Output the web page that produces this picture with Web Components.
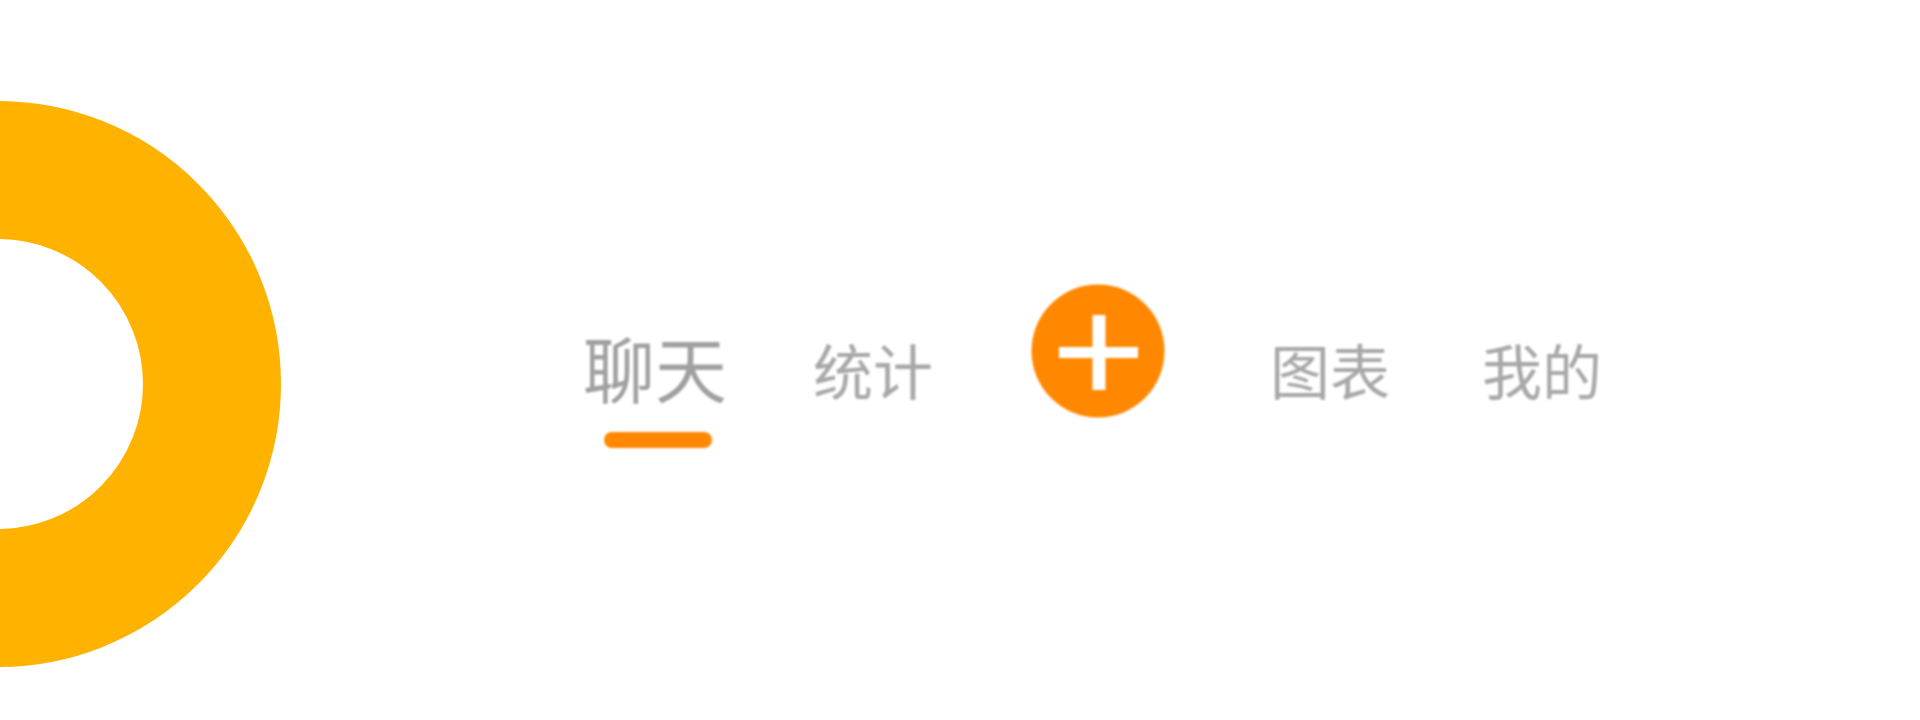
<!DOCTYPE html>
<html lang="zh">
<head>
<meta charset="utf-8">
<title>tabs</title>
<style>
  html, body { margin: 0; height: 100%; background: #fff; overflow: hidden; }
</style>
</head>
<body>
<app-page>
  <ring-mark></ring-mark>
  <tab-bar>
    <tab-item active>聊天</tab-item>
    <tab-item style="margin-left:86px">统计</tab-item>
    <add-button style="margin-left:97.5px"></add-button>
    <tab-item style="margin-left:105.5px">图表</tab-item>
    <tab-item style="margin-left:92px">我的</tab-item>
  </tab-bar>
</app-page>
<script>
class AppPage extends HTMLElement {
  constructor() {
    super();
    this.attachShadow({ mode: "open" }).innerHTML = `
      <style>
        :host {
          display: flex;
          align-items: flex-start;
          width: 1920px;
          height: 720px;
          overflow: hidden;
          font-family: "Noto Sans CJK SC", "Liberation Sans", sans-serif;
        }
      </style>
      <slot></slot>`;
  }
}
customElements.define("app-page", AppPage);

class RingMark extends HTMLElement {
  constructor() {
    super();
    this.attachShadow({ mode: "open" }).innerHTML = `
      <style>
        :host {
          display: block;
          flex: none;
          box-sizing: border-box;
          width: 566px;
          height: 566px;
          margin: 101px 0 0 -285px;
          border: 138px solid #ffb300;
          border-radius: 50%;
        }
      </style>`;
  }
}
customElements.define("ring-mark", RingMark);

class TabBar extends HTMLElement {
  constructor() {
    super();
    this.attachShadow({ mode: "open" }).innerHTML = `
      <style>
        :host {
          display: flex;
          align-items: flex-start;
          margin: 284px 0 0 302px;
        }
      </style>
      <slot></slot>`;
  }
}
customElements.define("tab-bar", TabBar);

class TabItem extends HTMLElement {
  constructor() {
    super();
    this.attachShadow({ mode: "open" }).innerHTML = `
      <style>
        :host {
          display: flex;
          flex-direction: column;
          align-items: center;
          flex: none;
          padding-top: 49px;
          font-size: 60px;
          line-height: 72px;
          color: #a8a8a8;
          filter: blur(0.8px);
        }
        :host([active]) {
          padding-top: 42px;
          font-size: 72px;
          line-height: 80px;
          color: #a0a0a0;
        }
        .bar { display: none; }
        :host([active]) .bar {
          display: block;
          width: 108px;
          height: 16px;
          margin: 26px 0 0 5px;
          border-radius: 8px;
          background: #ff8800;
        }
      </style>
      <slot></slot>
      <div class="bar"></div>`;
  }
}
customElements.define("tab-item", TabItem);

class AddButton extends HTMLElement {
  constructor() {
    super();
    this.attachShadow({ mode: "open" }).innerHTML = `
      <style>
        :host {
          display: block;
          flex: none;
          width: 134px;
          height: 134px;
          filter: blur(0.8px);
        }
        svg { display: block; }
      </style>
      <svg width="134" height="134" viewBox="0 0 134 134">
        <circle cx="67" cy="67" r="66.5" fill="#ff8800"/>
        <rect x="28" y="63" width="79" height="11" fill="#fff"/>
        <rect x="61.5" y="31" width="13" height="75" fill="#fff"/>
      </svg>`;
  }
}
customElements.define("add-button", AddButton);
</script>
</body>
</html>
